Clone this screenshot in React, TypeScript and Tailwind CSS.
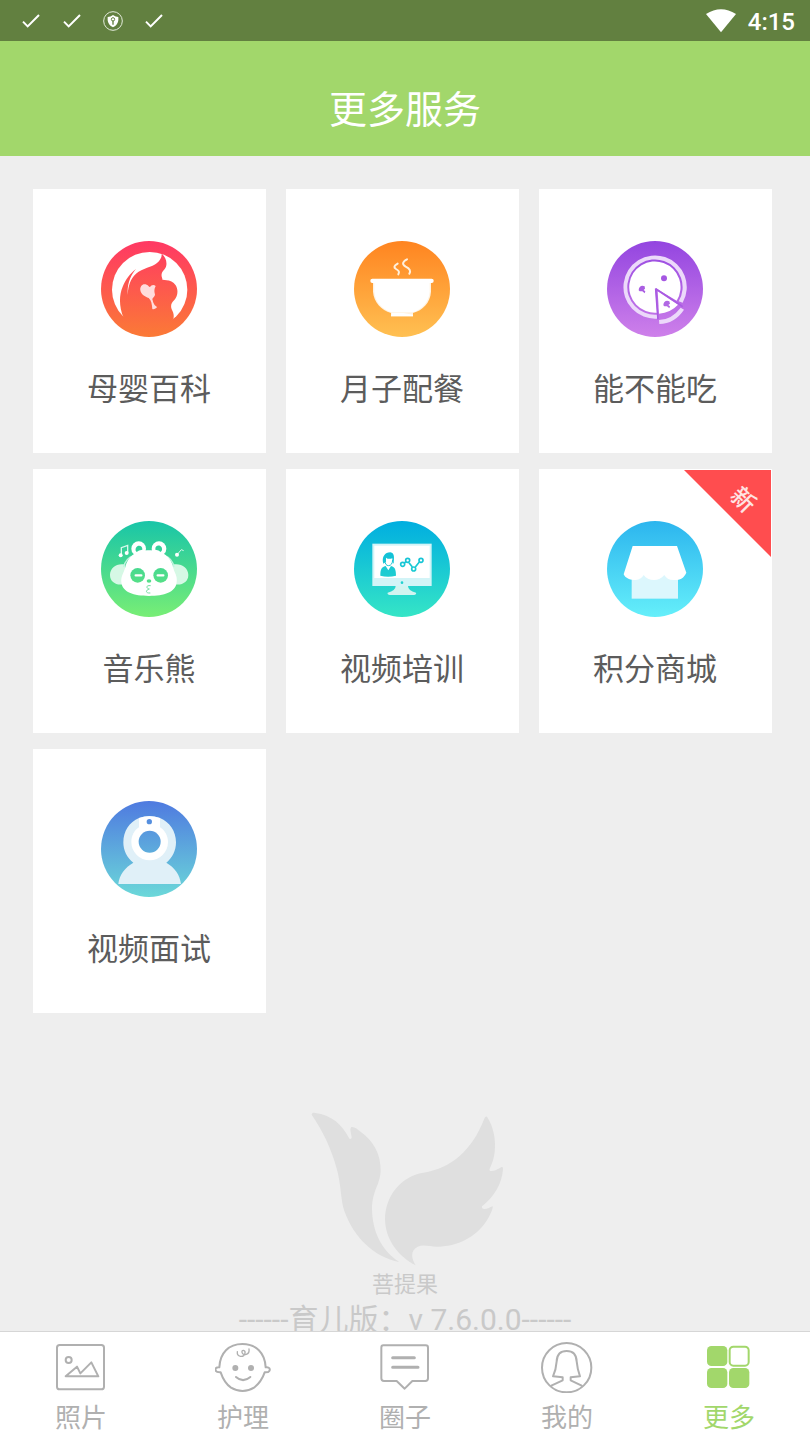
import type { ReactNode } from "react";

type IconProps = {
  id: string;
  viewBox: string;
  cx: number;
  cy: number;
  from: string;
  to: string;
  children: ReactNode;
};

function RoundIcon({ id, viewBox, cx, cy, from, to, children }: IconProps) {
  return (
    <svg viewBox={viewBox} className="size-24" aria-hidden="true">
      <defs>
        <linearGradient id={id} x1="0" y1="0" x2="0" y2="1">
          <stop offset="0" stopColor={from} />
          <stop offset="1" stopColor={to} />
        </linearGradient>
        <linearGradient
          id={`${id}-page`}
          gradientUnits="userSpaceOnUse"
          x1="0"
          y1={cy - 144}
          x2="0"
          y2={cy + 144}
        >
          <stop offset="0" stopColor={from} />
          <stop offset="1" stopColor={to} />
        </linearGradient>
      </defs>
      <circle cx={cx} cy={cy} r="144" fill={`url(#${id})`} />
      {children}
    </svg>
  );
}

function MotherIcon() {
  const paint = "url(#mother-page)";
  return (
    <RoundIcon id="mother" viewBox="33 33 288 288" cx={177} cy={177} from="#ff3864" to="#fb7a36">
      <circle cx="179" cy="179" r="113" fill="#fff" />
      <path
        d="M100 262C88 232 86 198 98 170C106 150 120 130 138 117C124 134 111 158 113 194C115 166 121 147 138 131C158 114 186 112 201 99C210 91 216 82 215 71C225 79 231 92 229 106C227 119 217 122 215 132C213 142 220 146 216 153C232 148 248 153 257 166C266 181 263 199 253 210C244 219 241 226 245 238C250 247 253 256 250 267C240 282 210 300 178 300C146 300 116 284 100 262Z"
        fill={paint}
      />
      <path d="M206 155C213 151 222 151 229 154" fill="none" stroke={paint} strokeWidth="4" />
      <path
        d="M151 181C149 168 159 159 170 164C175 166 176 170 180 171C184 164 192 163 197 168C192 177 193 184 194 190C198 198 189 202 187 208C190 217 190 224 201 231C198 236 191 239 187 237C186 223 184 211 176 204C165 200 153 194 151 181Z"
        fill="#ffdcdc"
      />
    </RoundIcon>
  );
}

function BowlIcon() {
  return (
    <RoundIcon id="bowl" viewBox="42 33 288 288" cx={186} cy={177} from="#ff8420" to="#ffc052">
      <path d="M99 158H273V185C271 218 248 241 219 249V259H153V249C124 240 101 216 99 185Z" fill="#fff3e2" />
      <path d="M103 158H269V185C267 217 244 239 218 247H155C126 238 105 215 103 185Z" fill="#fff" />
      <path d="M155 249H190L219 254V259H153Z" fill="#fff" />
      <rect x="91" y="146" width="190" height="13" rx="6" fill="#fff" />
      <path
        d="M173 101C162 107 160 112 168 117C177 122 179 126 175 133M201 88C186 96 186 103 197 110C210 117 213 122 208 131"
        fill="none"
        stroke="#fff0dd"
        strokeWidth="6"
        strokeLinecap="round"
      />
    </RoundIcon>
  );
}

function PizzaIcon() {
  return (
    <RoundIcon id="pizza" viewBox="36 33 288 288" cx={180} cy={177} from="#9345e0" to="#ce80ea">
      <path d="M187 266A95 95 0 1 1 263 218L251 214A83 83 0 1 0 186 254Z" fill="#ecd9fa" />
      <path d="M186 248A77 77 0 1 1 245 212L181 174Z" fill="#fff" />
      <path d="M188 184L249 224Q227 248 192 251Z" fill="#fff" />
      <path d="M182 176L263 230M182 176L189 268" stroke="#a95be2" strokeWidth="5" fill="none" />
      <path d="M192 270Q230 269 257 233L267 239Q239 281 193 282Z" fill="#ecd9fa" />
      <circle cx="207" cy="145" r="9" fill="#a557e2" />
      <path d="M131 181C131 170 140 164 149 169L150 176L146 180L151 184L149 190L142 184L134 184Z" fill="#aa5ee2" />
      <path d="M205 226C205 215 214 209 223 214L225 221L220 225L225 229L223 235L216 229L208 229Z" fill="#b168e4" />
    </RoundIcon>
  );
}

function PandaIcon() {
  const paint = "url(#panda-page)";
  return (
    <RoundIcon id="panda" viewBox="33 33 288 288" cx={177} cy={177} from="#18c5a8" to="#78ee75">
      <path d="M106 164C82 158 60 172 60 195C60 217 81 228 103 222ZM247 164C272 158 295 172 295 195C295 217 274 228 251 222Z" fill="#d6f8e5" />
      <path d="M101 171Q107 145 130 137M252 171Q247 145 224 137" fill="none" stroke="#c0f3df" strokeWidth="4" />
      <circle cx="146" cy="116" r="22" fill="#fff" />
      <circle cx="207" cy="116" r="22" fill="#fff" />
      <path
        d="M177 121C213 119 243 139 249 171C253 189 263 196 260 217C257 247 223 258 177 258C131 258 97 247 94 217C92 197 102 189 106 171C113 139 141 119 177 121Z"
        fill="#fff"
      />
      <path d="M137 122C134 103 159 102 157 119Q146 120 140 126ZM196 119C194 102 219 103 216 121L212 126Q207 120 196 119Z" fill={paint} />
      <circle cx="143" cy="196" r="22" fill={paint} />
      <circle cx="212" cy="196" r="22" fill={paint} />
      <path d="M137 196H154M203 196H220" stroke="#fff" strokeWidth="7" strokeLinecap="round" />
      <ellipse cx="177" cy="213" rx="7" ry="5" fill={paint} />
      <path
        d="M182 227C166 225 169 236 178 237C167 240 165 250 181 249"
        fill="none"
        stroke="#72dfa1"
        strokeWidth="3"
      />
      <path d="M94 134V113L113 106V128" fill="none" stroke="#d7f8ec" strokeWidth="4" />
      <circle cx="92" cy="136" r="6" fill="#fff" />
      <circle cx="110" cy="129" r="6" fill="#fff" />
      <path d="M262 133L274 119L281 122" fill="none" stroke="#d7f8ec" strokeWidth="3" />
      <circle cx="261" cy="134" r="6" fill="#fff" />
    </RoundIcon>
  );
}

function TrainingIcon() {
  const paint = "url(#training-page)";
  return (
    <RoundIcon id="training" viewBox="42 33 288 288" cx={186} cy={177} from="#00aee0" to="#35e5c6">
      <rect x="97" y="101" width="178" height="127" fill="#d2f4f7" />
      <rect x="103" y="107" width="166" height="97" fill="#fff" />
      <circle cx="186" cy="218" r="4" fill={paint} />
      <path d="M167 228H204Q204 242 228 248Q231 255 216 255H155Q140 255 143 248Q167 242 167 228Z" fill="#d2f4f0" />
      <path
        d="M130 161C124 141 135 127 151 127C165 130 162 143 161 161L157 156V145Q145 149 138 143V155ZM121 197C121 181 123 171 137 168L145 181L153 168C166 170 168 183 168 197Q144 203 121 197Z"
        fill={paint}
      />
      <path d="M135 151Q135 167 146 167Q157 166 158 150" fill="none" stroke={paint} strokeWidth="3" />
      <g fill="none" stroke={paint} strokeWidth="5">
        <path d="M193 159L198 155M207 158L217 171M226 171L238 156" />
        <circle cx="188" cy="163" r="6" />
        <circle cx="203" cy="151" r="6" />
        <circle cx="221" cy="177" r="6" />
        <circle cx="243" cy="151" r="6" />
      </g>
    </RoundIcon>
  );
}

function ShopIcon() {
  return (
    <RoundIcon id="shop" viewBox="36 183 288 288" cx={180} cy={327} from="#2cb5ee" to="#65effa">
      <rect x="110" y="345" width="139" height="71" fill="#dcf7fd" />
      <path
        d="M113 258H246L274 338C267 355 253 361 236 360C222 360 213 354 208 345C199 355 190 360 177 360C164 360 153 355 146 345C140 356 129 360 117 360C102 359 91 354 86 343Z"
        fill="#fff"
      />
    </RoundIcon>
  );
}

function WebcamIcon() {
  const paint = "url(#webcam-page)";
  return (
    <RoundIcon id="webcam" viewBox="33 33 288 288" cx={177} cy={177} from="#4f7ae0" to="#6bd8d9">
      <path
        d="M147 84Q178 72 210 84C239 96 258 124 258 157C258 182 247 204 229 218C254 232 270 255 273 282H85C88 255 105 232 130 218C111 204 100 182 100 157C100 124 118 96 147 84Z"
        fill="#e0f0f8"
      />
      <path d="M147 84Q178 74 210 84V112C224 121 234 136 234 156A55 55 0 1 1 124 156C124 136 133 121 147 112Z" fill="#fff" />
      <circle cx="179" cy="155" r="33" fill={paint} />
      <circle cx="178" cy="95" r="8" fill={paint} />
    </RoundIcon>
  );
}

const services = [
  { name: "母婴百科", icon: <MotherIcon /> },
  { name: "月子配餐", icon: <BowlIcon /> },
  { name: "能不能吃", icon: <PizzaIcon /> },
  { name: "音乐熊", icon: <PandaIcon /> },
  { name: "视频培训", icon: <TrainingIcon /> },
  { name: "积分商城", icon: <ShopIcon />, isNew: true },
  { name: "视频面试", icon: <WebcamIcon /> },
];

const tabs = [
  {
    name: "照片",
    viewBox: "159 48 168 156",
    drawing: (
      <>
        <rect x="171" y="60" width="141" height="133" rx="8" />
        <circle cx="206" cy="105" r="9" />
        <path d="M197 154L231 125L241 145L274 112L295 154Z" />
      </>
    ),
  },
  {
    name: "护理",
    viewBox: "645 48 168 156",
    drawing: (
      <>
        <path d="M658 127C660 84 686 57 727 57C768 57 795 84 797 127C809 125 811 133 808 138C805 143 799 142 794 142C788 160 776 177 762 188C742 201 714 201 693 188C678 177 668 160 662 142C656 142 649 143 647 137C645 130 649 126 658 127Z" />
        <path d="M708 156Q729 175 751 156" />
        <path d="M712 80C710 97 731 99 735 85C737 75 724 73 726 82C729 94 750 90 747 72" strokeWidth="4" />
        <circle cx="706" cy="129" r="9" fill="currentColor" stroke="none" />
        <circle cx="753" cy="129" r="9" fill="currentColor" stroke="none" />
      </>
    ),
  },
  {
    name: "圈子",
    viewBox: "1131 48 168 156",
    drawing: (
      <>
        <path d="M1150 61H1277Q1284 61 1284 68V160Q1284 168 1276 168H1237L1214 191L1190 168H1152Q1144 168 1144 160V68Q1144 61 1150 61Z" />
        <path d="M1178 98H1243M1178 127H1254" strokeWidth="9" />
      </>
    ),
  },
  {
    name: "我的",
    viewBox: "402 48 168 156",
    drawing: (
      <>
        <circle cx="485" cy="128" r="74" />
        <path d="M439 182L473 166V157L444 154Q453 135 455 109C456 88 467 78 485 78C503 78 514 88 515 109Q517 132 525 154L497 157V166L530 182" />
      </>
    ),
  },
  {
    name: "更多",
    active: true,
    viewBox: "888 48 168 156",
    drawing: (
      <>
        <rect x="906" y="63" width="61" height="60" rx="13" fill="currentColor" stroke="none" />
        <rect x="974" y="65" width="57" height="57" rx="11" />
        <rect x="906" y="129" width="61" height="60" rx="13" fill="currentColor" stroke="none" />
        <rect x="972" y="129" width="61" height="60" rx="13" fill="currentColor" stroke="none" />
      </>
    ),
  },
];

function Check() {
  return (
    <svg viewBox="0 0 54 42" className="h-3.5 w-[18px]" fill="none" stroke="#fff" strokeWidth="6" aria-hidden="true">
      <path d="M3 23L17 37L51 3" />
    </svg>
  );
}

function StatusBar() {
  return (
    <div className="flex h-[41px] shrink-0 items-center justify-between bg-[#628040] pr-[15px] pl-[22px] text-white">
      <div className="flex items-center gap-[23px]">
        <Check />
        <Check />
        <svg viewBox="0 0 60 60" className="-mx-px size-5" aria-hidden="true">
          <circle cx="30" cy="30" r="28" fill="none" stroke="#e4ebdc" strokeWidth="3" />
          <path d="M30 12Q38 18 46 18V28Q45 42 30 49Q15 42 14 28V18Q23 18 30 12Z" fill="#fff" />
          <circle cx="30" cy="25" r="5" fill="none" stroke="#628040" strokeWidth="3" />
          <path d="M30 29V41" stroke="#628040" strokeWidth="4" />
        </svg>
        <Check />
      </div>
      <div className="flex items-center gap-3">
        <svg viewBox="0 0 90 72" className="h-6 w-[30px]" aria-hidden="true">
          <path d="M0 15Q45 -14 90 15L45 70Z" fill="#fff" />
        </svg>
        <span className="pt-0.5 text-2xl font-medium">4:15</span>
      </div>
    </div>
  );
}

export default function App() {
  return (
    <div
      lang="zh-CN"
      className="flex h-screen flex-col bg-[#eeeeee] font-['Roboto','Noto_Sans_CJK_SC',sans-serif]"
    >
      <StatusBar />
      <header className="flex h-[115px] shrink-0 items-center justify-center bg-[#a2d76b] pt-[22px]">
        <h1 className="text-[38px] leading-[48px] text-white">更多服务</h1>
      </header>

      <main className="min-h-0 flex-1 overflow-y-auto pt-[33px] [scrollbar-width:none]">
        <div className="grid grid-cols-3 gap-x-5 gap-y-4 pr-[38px] pl-[33px]">
          {services.map((service) => (
            <button
              key={service.name}
              type="button"
              className="relative flex flex-col items-center bg-white pt-[52px] pr-px pb-[43px]"
            >
              {service.icon}
              <span className="mt-[33px] text-[31px] leading-10 text-[#5c5c5c]">{service.name}</span>
              {service.isNew && (
                <span className="absolute top-px right-px size-[87px] bg-[#ff4d4f] [clip-path:polygon(0_0,100%_0,100%_100%)]">
                  <span className="absolute top-[18px] right-4 flex size-6 rotate-45 items-center justify-center text-2xl leading-6 font-medium text-[#ffe3e3]">
                    新
                  </span>
                </span>
              )}
            </button>
          ))}
        </div>

        <footer className="mt-[97px] flex flex-col items-center text-[#c9c9c9]">
          <svg viewBox="219 60 612 480" className="h-40 w-[204px]" fill="#dfdfdf" aria-hidden="true">
            <path d="M245 74C246 68 250 68 256 69C303 74 337 104 357 144Q360 150 365 144C366 136 357 117 364 111C372 109 384 118 392 125C431 153 453 193 452 244C449 287 427 302 426 357C427 423 454 482 508 516C433 502 371 442 343 363C331 328 334 282 319 232C303 174 279 124 245 74Z" />
            <path d="M557 526C510 502 466 453 465 387C466 316 514 259 580 248C666 236 727 177 761 91C764 82 767 78 771 80C791 110 798 150 794 187C792 205 787 220 779 236Q777 244 785 243C799 242 806 235 815 231Q820 230 819 238C816 281 793 320 756 349Q755 357 763 357C773 357 780 352 788 349C789 353 787 359 785 363C759 429 697 467 628 470C603 472 583 462 563 470C539 482 545 508 557 526Z" />
          </svg>
          <p className="text-[22px] leading-[30px]">菩提果</p>
          <p className="text-[30px] leading-10 whitespace-nowrap">------育儿版：v 7.6.0.0------</p>
        </footer>
      </main>

      <nav className="grid h-[109px] shrink-0 grid-cols-5 border-t border-[#d6d6d6] bg-white">
        {tabs.map((tab) => (
          <a
            key={tab.name}
            href="#"
            aria-current={tab.active ? "page" : undefined}
            className={
              tab.active
                ? "flex flex-col items-center pt-[9px] text-[#a2d76b]"
                : "flex flex-col items-center pt-[9px] text-[#b0b0b0]"
            }
          >
            <svg
              viewBox={tab.viewBox}
              className="h-[52px] w-14"
              fill="none"
              stroke="currentColor"
              strokeWidth="6"
              strokeLinecap="round"
              strokeLinejoin="round"
              aria-hidden="true"
            >
              {tab.drawing}
            </svg>
            <span className="mt-[9px] text-[26px] leading-8">{tab.name}</span>
          </a>
        ))}
      </nav>
    </div>
  );
}
